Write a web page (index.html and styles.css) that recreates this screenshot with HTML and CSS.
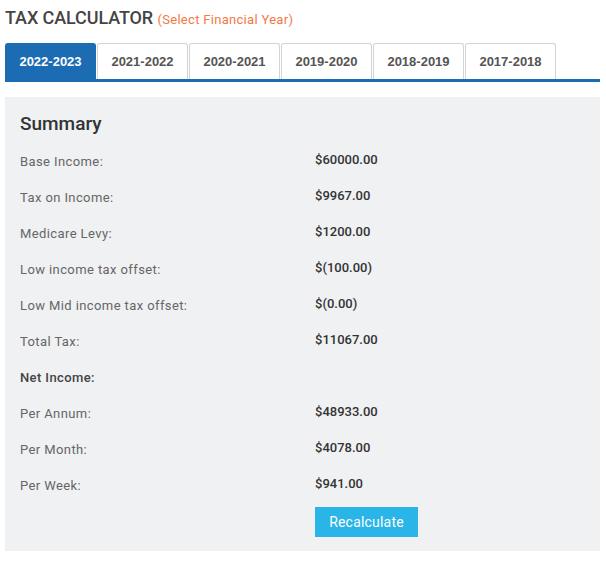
FILE: index.html
```html
<!DOCTYPE html>
<html>
<head>
<meta charset="utf-8">
<link rel="stylesheet" href="styles.css">
</head>
<body>
<div class="calc">
  <h1 class="title">TAX CALCULATOR <span class="sub">(Select Financial Year)</span></h1>
  <ul class="tabs">
    <li class="tab active">2022-2023</li>
    <li class="tab">2021-2022</li>
    <li class="tab">2020-2021</li>
    <li class="tab">2019-2020</li>
    <li class="tab">2018-2019</li>
    <li class="tab">2017-2018</li>
  </ul>
  <div class="panel">
    <h2 class="summary">Summary</h2>
    <div class="row"><span class="label">Base Income:</span><span class="value">$60000.00</span></div>
    <div class="row"><span class="label">Tax on Income:</span><span class="value">$9967.00</span></div>
    <div class="row"><span class="label">Medicare Levy:</span><span class="value">$1200.00</span></div>
    <div class="row"><span class="label">Low income tax offset:</span><span class="value">$(100.00)</span></div>
    <div class="row"><span class="label">Low Mid income tax offset:</span><span class="value">$(0.00)</span></div>
    <div class="row"><span class="label">Total Tax:</span><span class="value">$11067.00</span></div>
    <div class="row"><span class="label strong">Net Income:</span></div>
    <div class="row"><span class="label">Per Annum:</span><span class="value">$48933.00</span></div>
    <div class="row"><span class="label">Per Month:</span><span class="value">$4078.00</span></div>
    <div class="row"><span class="label">Per Week:</span><span class="value">$941.00</span></div>
    <div class="row btnrow"><span class="label"></span><button class="btn">Recalculate</button></div>
  </div>
</div>
</body>
</html>
```

FILE: styles.css
```css
* { box-sizing: border-box; }
body {
  margin: 0;
  background: #fff;
  font-family: Roboto, "Liberation Sans", sans-serif;
  color: #555;
}
.calc {
  padding: 5px 6px 0 5px;
}
.title {
  margin: 0;
  font-size: 18px;
  font-weight: 500;
  color: #444;
  line-height: 26px;
  letter-spacing: -0.1px;
}
.sub {
  font-size: 13px;
  font-weight: 400;
  color: #f07a45;
  letter-spacing: 0.3px;
}
.tabs {
  list-style: none;
  margin: 10px 0 0 0;
  padding: 0;
  display: flex;
  gap: 1px;
  border-bottom: 3px solid #1c6cb4;
}
.tab {
  width: 91px;
  height: 36px;
  border: 1px solid #d4d4d4;
  border-bottom: none;
  border-radius: 3px 3px 0 0;
  font-family: "Liberation Sans", Arial, sans-serif;
  font-weight: bold;
  font-size: 13px;
  color: #555;
  display: flex;
  align-items: center;
  justify-content: center;
  background: #fff;
}
.tab.active {
  background: #1c6cb4;
  border-color: #1c6cb4;
  color: #fff;
}
.panel {
  margin-top: 15px;
  background: #f0f1f3;
  padding: 14px 15px 14px 15px;
  height: 454px;
}
.summary {
  margin: 0 0 9px 0;
  font-size: 19px;
  font-weight: 500;
  color: #333;
  line-height: 26px;
}
.row {
  display: flex;
  height: 36px;
  align-items: flex-start;
}
.label {
  width: 295px;
  font-size: 13px;
  color: #666;
  letter-spacing: 0.4px;
  padding-top: 7px;
  line-height: 18px;
}
.label.strong {
  font-weight: 500;
  color: #444;
}
.value {
  font-size: 13px;
  font-weight: 500;
  color: #333;
  padding-top: 5px;
  line-height: 18px;
}
.btnrow { height: auto; }
.btn {
  margin-top: 1px;
  width: 103px;
  height: 30px;
  border: none;
  background: #29b5e8;
  color: #fff;
  font-family: Roboto, "Liberation Sans", sans-serif;
  font-size: 14px;
  letter-spacing: 0.2px;
  padding: 0;
}
```
